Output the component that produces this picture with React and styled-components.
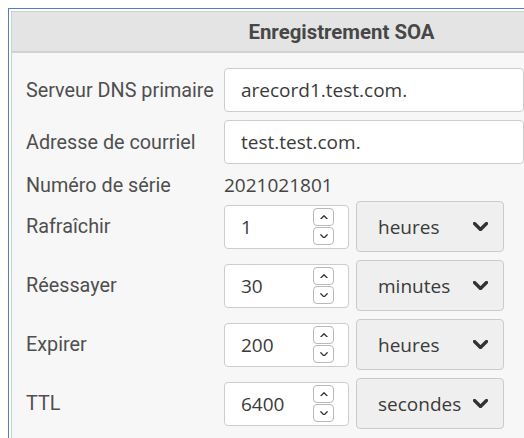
import React from "react"
import styled, { createGlobalStyle } from "styled-components"

const GlobalStyle = createGlobalStyle`
  html, body {
    margin: 0;
    padding: 0;
    background: #ffffff;
    overflow: hidden;
  }
`

const Viewport = styled.div`
  width: 100vw;
  height: 100vh;
  overflow: hidden;
`

// outer frame: blue focus line on the top and left edges
const Frame = styled.div`
  margin: 8px 0 0 8px;
  padding: 2px 0 0 2px;
  border-top: 1px solid #4f7fc3;
  border-left: 1px solid #4f7fc3;
  width: 660px;
`

const Panel = styled.section`
  border: 1px solid #cfcfcf;
  border-right: none;
  background: #f7f7f7;
  font-family: Roboto, "Liberation Sans", sans-serif;
`

const Header = styled.div`
  height: 39px;
  display: flex;
  align-items: center;
  justify-content: center;
  background: #e4e4e4;
  border-bottom: 2px solid #d2d2d2;
  font-size: 20.4px;
  font-weight: bold;
  color: #474747;
`

const Form = styled.div`
  display: flex;
  flex-direction: column;
  gap: 8px;
  padding: 15px 0 20px 14px;
`

const Row = styled.div`
  display: grid;
  grid-template-columns: 198px auto;
  align-items: center;
  height: ${(p) => p.$h}px;
`

const Label = styled.label`
  font-size: 19.8px;
  color: #4f4f4f;
`

const TextInput = styled.div`
  box-sizing: border-box;
  width: 300px;
  height: 44px;
  display: flex;
  align-items: center;
  padding-left: 16px;
  background: #fff;
  border: 1px solid #cdcdcd;
  border-radius: 4px;
  font-family: "Open Sans", "Noto Sans", sans-serif;
  font-size: 19px;
  color: #3a3a3a;
`

const Value = styled.span`
  font-family: "Open Sans", "Noto Sans", sans-serif;
  font-size: 19px;
  color: #444;
`

const Controls = styled.div`
  display: flex;
  align-items: center;
  gap: 7px;
`

const NumberBox = styled(TextInput)`
  width: 125px;
  justify-content: space-between;
  padding-right: 14px;
`

const Spinner = styled.div`
  display: flex;
  flex-direction: column;
  gap: 1px;
`

const SpinButton = styled.span`
  box-sizing: border-box;
  width: 21px;
  height: 18px;
  display: flex;
  align-items: center;
  justify-content: center;
  border: 1px solid #b9b9b9;
  border-radius: 4px;
  background: #fff;
`

const Select = styled.div`
  box-sizing: border-box;
  width: 148px;
  height: 51px;
  display: flex;
  align-items: center;
  justify-content: space-between;
  padding: 0 15px 0 21px;
  background: #efefef;
  border: 1px solid #cbcbcb;
  border-radius: 4px;
  font-family: "Open Sans", "Noto Sans", sans-serif;
  font-size: 19px;
  color: #3a3a3a;
`

const Chevron = ({ up, size = 8, stroke = 1.6 }) => (
  <svg width={size} height={size * 0.6} viewBox="0 0 10 6" fill="none">
    <path
      d={up ? "M1 5 L5 1 L9 5" : "M1 1 L5 5 L9 1"}
      stroke="#333"
      strokeWidth={stroke}
      strokeLinecap="round"
      strokeLinejoin="round"
    />
  </svg>
)

const timers = [
  { label: "Rafraîchir", value: "1", unit: "heures" },
  { label: "Réessayer", value: "30", unit: "minutes" },
  { label: "Expirer", value: "200", unit: "heures" },
  { label: "TTL", value: "6400", unit: "secondes" },
]

export default function App() {
  return (
    <Viewport>
      <GlobalStyle />
      <Frame>
        <Panel>
          <Header>Enregistrement SOA</Header>
          <Form>
            <Row $h={44}>
              <Label>Serveur DNS primaire</Label>
              <TextInput>arecord1.test.com.</TextInput>
            </Row>
            <Row $h={44}>
              <Label>Adresse de courriel</Label>
              <TextInput>test.test.com.</TextInput>
            </Row>
            <Row $h={21}>
              <Label>Numéro de série</Label>
              <Value>2021021801</Value>
            </Row>
            {timers.map((t) => (
              <Row key={t.label} $h={51}>
                <Label>{t.label}</Label>
                <Controls>
                  <NumberBox>
                    {t.value}
                    <Spinner>
                      <SpinButton><Chevron up /></SpinButton>
                      <SpinButton><Chevron /></SpinButton>
                    </Spinner>
                  </NumberBox>
                  <Select>
                    {t.unit}
                    <Chevron size={15} stroke={2.2} />
                  </Select>
                </Controls>
              </Row>
            ))}
          </Form>
        </Panel>
      </Frame>
    </Viewport>
  )
}
